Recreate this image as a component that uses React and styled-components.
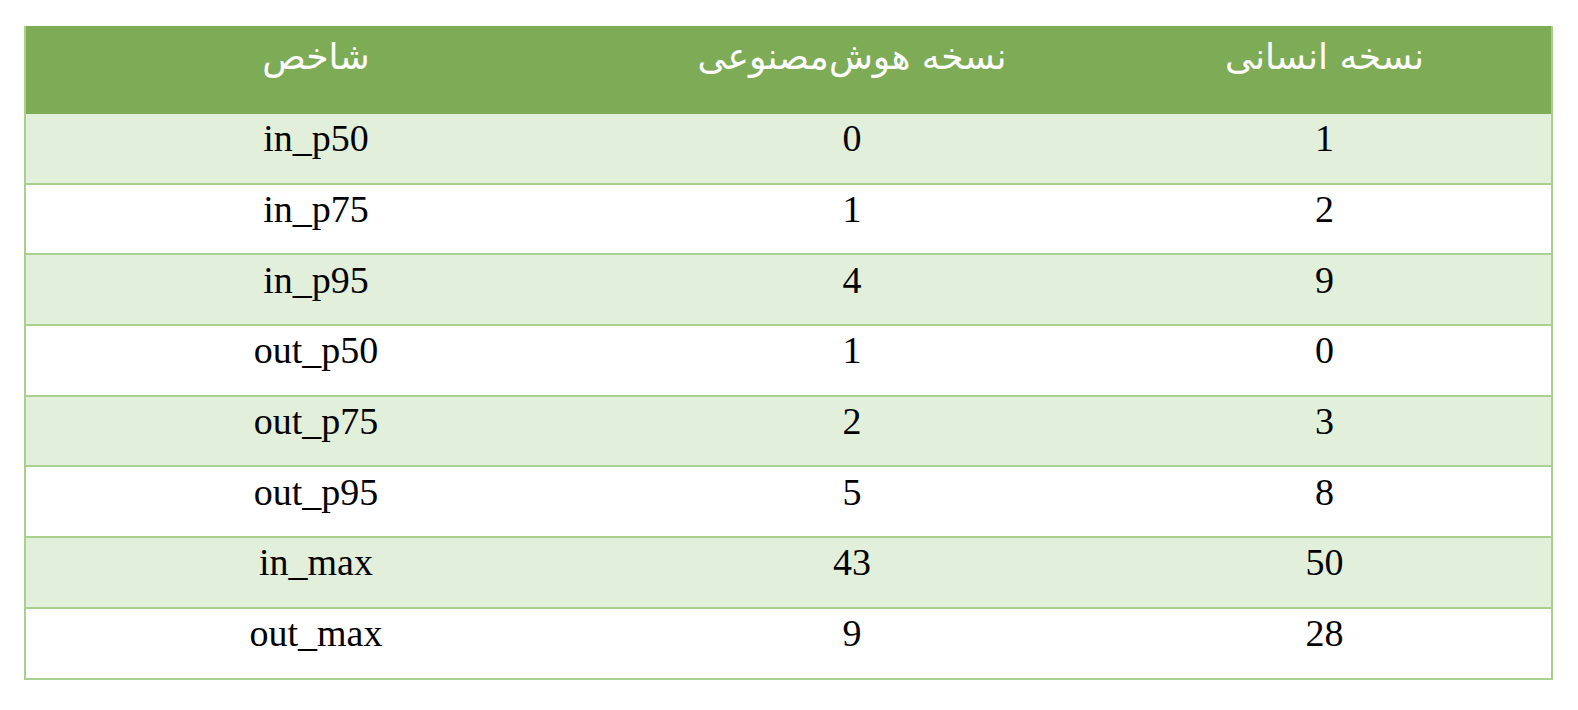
import React from "react";
import styled, { createGlobalStyle } from "styled-components";

const GlobalStyle = createGlobalStyle`
  html, body {
    margin: 0;
    padding: 0;
    background: #ffffff;
  }
`;

const Page = styled.div`
  padding: 26px 25px 0 24px;
  width: 1578px;
  height: 710px;
  box-sizing: border-box;
`;

const Table = styled.table`
  width: 1529px;
  border-collapse: separate;
  border-spacing: 0;
  border-left: 2px solid #a9d08e;
  border-right: 2px solid #a9d08e;
  table-layout: fixed;
`;

const HeadCell = styled.th`
  height: 88px;
  background: #7eab55;
  color: #ffffff;
  font-family: "DejaVu Sans", "Noto Sans", sans-serif;
  font-weight: normal;
  font-size: 36px;
  padding: 0 0 28px;
  box-sizing: border-box;
  text-align: center;
  vertical-align: middle;
`;

const Cell = styled.td`
  height: 70.7px;
  box-sizing: border-box;
  background: ${(p) => (p.$shaded ? "#e2efda" : "#ffffff")};
  border-bottom: 2px solid #a9d08e;
  font-family: "Liberation Serif", "Times New Roman", serif;
  font-size: 38px;
  color: #000000;
  text-align: center;
  vertical-align: middle;
  padding: 0 0 20px;
`;

const rows = [
  ["in_p50", "0", "1"],
  ["in_p75", "1", "2"],
  ["in_p95", "4", "9"],
  ["out_p50", "1", "0"],
  ["out_p75", "2", "3"],
  ["out_p95", "5", "8"],
  ["in_max", "43", "50"],
  ["out_max", "9", "28"],
];

export default function App() {
  return (
    <>
      <GlobalStyle />
      <Page>
        <Table>
          <colgroup>
            <col style={{ width: 580 }} />
            <col style={{ width: 492 }} />
            <col />
          </colgroup>
          <thead>
            <tr>
              <HeadCell>شاخص</HeadCell>
              <HeadCell>نسخه هوش‌مصنوعی</HeadCell>
              <HeadCell>نسخه انسانی</HeadCell>
            </tr>
          </thead>
          <tbody>
            {rows.map((r, i) => (
              <tr key={r[0]}>
                {r.map((v, j) => (
                  <Cell key={j} $shaded={i % 2 === 0}>
                    {v}
                  </Cell>
                ))}
              </tr>
            ))}
          </tbody>
        </Table>
      </Page>
    </>
  );
}
